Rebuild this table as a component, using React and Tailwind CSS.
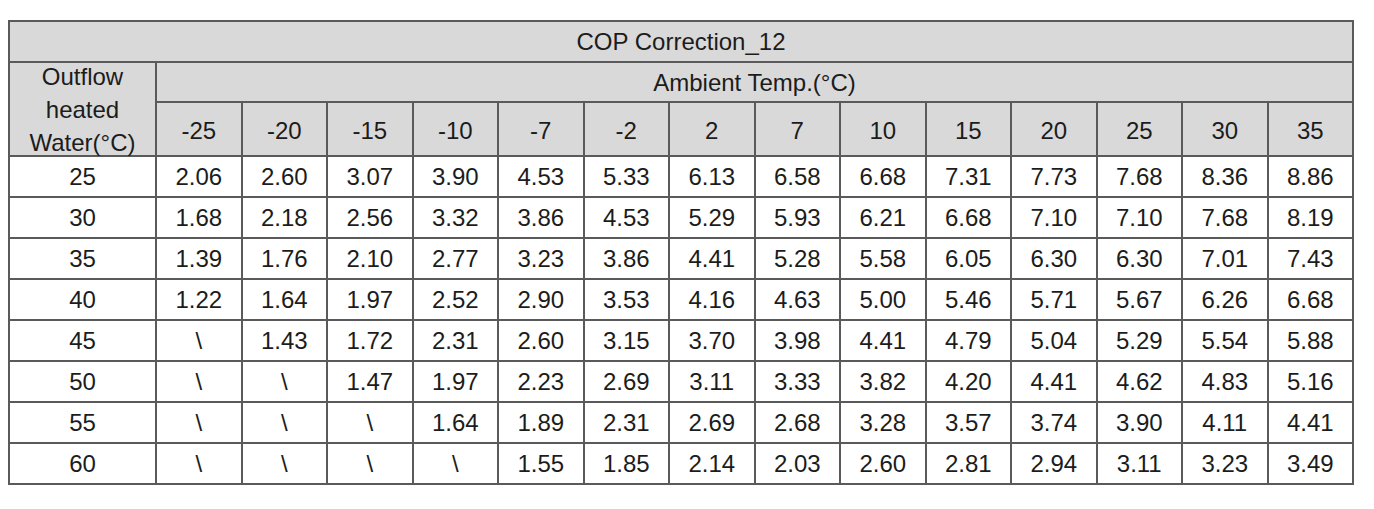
import React from "react";

const temps = ["-25", "-20", "-15", "-10", "-7", "-2", "2", "7", "10", "15", "20", "25", "30", "35"];

const rows = [
  ["25", "2.06 2.60 3.07 3.90 4.53 5.33 6.13 6.58 6.68 7.31 7.73 7.68 8.36 8.86"],
  ["30", "1.68 2.18 2.56 3.32 3.86 4.53 5.29 5.93 6.21 6.68 7.10 7.10 7.68 8.19"],
  ["35", "1.39 1.76 2.10 2.77 3.23 3.86 4.41 5.28 5.58 6.05 6.30 6.30 7.01 7.43"],
  ["40", "1.22 1.64 1.97 2.52 2.90 3.53 4.16 4.63 5.00 5.46 5.71 5.67 6.26 6.68"],
  ["45", "\\ 1.43 1.72 2.31 2.60 3.15 3.70 3.98 4.41 4.79 5.04 5.29 5.54 5.88"],
  ["50", "\\ \\ 1.47 1.97 2.23 2.69 3.11 3.33 3.82 4.20 4.41 4.62 4.83 5.16"],
  ["55", "\\ \\ \\ 1.64 1.89 2.31 2.69 2.68 3.28 3.57 3.74 3.90 4.11 4.41"],
  ["60", "\\ \\ \\ \\ 1.55 1.85 2.14 2.03 2.60 2.81 2.94 3.11 3.23 3.49"],
];

export default function App() {
  return (
    <div
      className="min-h-[509px] bg-white pt-[20px] pl-[8px] text-[24px] text-[#1c1c1c]"
      style={{ fontFamily: '"Liberation Sans", Arial, sans-serif' }}
    >
      <div className="grid w-[1346px] grid-cols-[145px_repeat(14,1fr)] grid-rows-[39px_38px_52px_repeat(8,39px)] gap-[2px] bg-[#5a5a5a] p-[2px]">
        <div className="col-span-15 flex items-center justify-center bg-[#d9d9d9] leading-none">
          COP Correction_12
        </div>
        <div className="row-span-2 flex items-center justify-center bg-[#d9d9d9] text-center leading-[33px]">
          <div>
            Outflow
            <br />
            heated
            <br />
            Water(°C)
          </div>
        </div>
        <div className="col-span-14 flex items-center justify-center bg-[#d9d9d9] pt-[1px] leading-none">
          Ambient Temp.(°C)
        </div>
        {temps.map((t) => (
          <div key={t} className="flex items-center justify-center bg-[#d9d9d9] pt-[4px] leading-none">
            {t}
          </div>
        ))}
        {rows.map(([w, vals]) => (
          <React.Fragment key={w}>
            <div className="flex items-center justify-center bg-white leading-none">{w}</div>
            {vals.split(" ").map((v, i) => (
              <div key={i} className="flex items-center justify-center bg-white leading-none">
                {v}
              </div>
            ))}
          </React.Fragment>
        ))}
      </div>
    </div>
  );
}
